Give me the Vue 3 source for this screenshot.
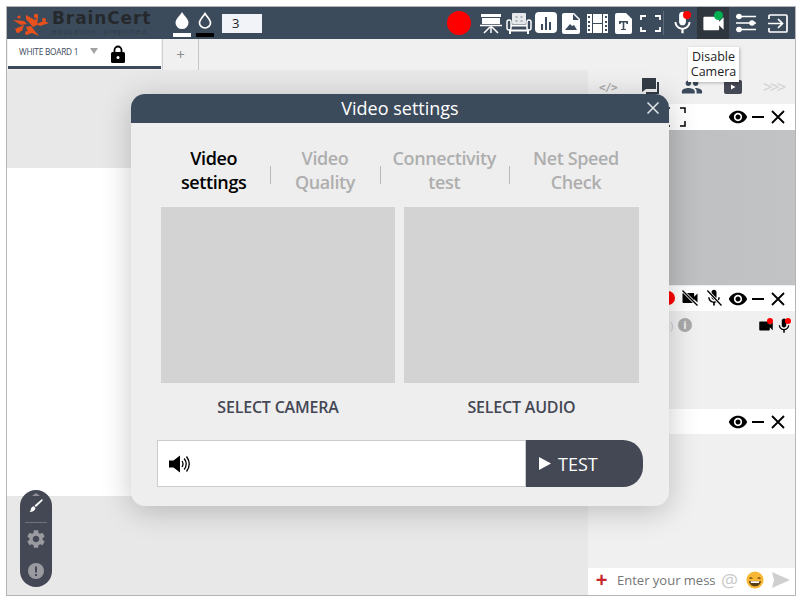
<script setup>
const modalTabs = [
  { label: 'Video settings', width: 114, active: true },
  { label: 'Video Quality', width: 110 },
  { label: 'Connectivity test', width: 130 },
  { label: 'Net Speed Check', width: 135 }
]
</script>

<template>
  <div class="page">
    <svg class="sprite" width="0" height="0">
      <symbol id="eye" viewBox="0 0 24 24"><path d="M12 4.5C7 4.5 2.73 7.61 1 12c1.73 4.39 6 7.5 11 7.5s9.27-3.11 11-7.5c-1.73-4.39-6-7.5-11-7.5zM12 17c-2.76 0-5-2.24-5-5s2.24-5 5-5 5 2.24 5 5-2.24 5-5 5zm0-8c-1.66 0-3 1.34-3 3s1.34 3 3 3 3-1.34 3-3-1.34-3-3-3z" /></symbol>
      <symbol id="cam" viewBox="0 0 24 24"><path d="M17 10.5V7c0-.55-.45-1-1-1H4c-.55 0-1 .45-1 1v10c0 .55.45 1 1 1h12c.55 0 1-.45 1-1v-3.5l4 4v-11l-4 4z" /></symbol>
      <symbol id="mic" viewBox="0 0 24 24"><path d="M12 14c1.66 0 2.99-1.34 2.99-3L15 5c0-1.66-1.34-3-3-3S9 3.34 9 5v6c0 1.66 1.34 3 3 3zm5.3-3c0 3-2.54 5.1-5.3 5.1S6.7 14 6.7 11H5c0 3.41 2.72 6.23 6 6.72V21h2v-3.28c3.28-.48 6-3.3 6-6.72h-1.7z" /></symbol>
      <symbol id="controls" viewBox="0 0 60 20">
        <use href="#eye" x="0" y="0" width="20" height="20" />
        <path d="M24 10h12" stroke="#000" stroke-width="2" fill="none" />
        <path d="M44 4l12 12M56 4L44 16" stroke="#000" stroke-width="1.8" fill="none" />
      </symbol>
    </svg>

    <div class="frame">
      <header class="topbar">
        <div class="logo">
          <svg class="logo-mark" width="38" height="26" viewBox="0 0 38 26">
            <g fill="#e8501c">
              <circle cx="24" cy="4" r="2.2" />
              <path d="M14 3l9 5 3-3-1 8-4 2-7-8zM1 8l11 1 3 3-6 1zM32 9l5 2-9 3-4-2zM3 17l9-4-2 6-5 1zM14 15l5-1 3 4 5 6-7-3-3 1z" />
              <circle cx="7" cy="5" r="1.6" />
              <circle cx="32" cy="8" r="2" />
              <circle cx="6" cy="19" r="2" />
              <circle cx="15" cy="21" r="2" />
            </g>
          </svg>
          <div class="logo-words">
            <span class="logo-name">BrainCert</span>
            <span class="logo-tag">education. simplified.</span>
          </div>
        </div>

        <div class="color-pick">
          <svg width="14" height="17" viewBox="0 0 14 17"><path d="M7 0c3 4.600 6.500 7.500 6.500 10.700a6.500 6.300 0 0 1-13 0C.5 7.500 4 4.600 7 0z" fill="#fff" /></svg>
          <i class="swatch white"></i>
        </div>
        <div class="color-pick second">
          <svg width="14" height="17" viewBox="0 0 14 17"><path d="M7 1.500c2.700 4 5.500 6.500 5.500 9.200a5.500 5.300 0 0 1-11 0C1.500 8 4.300 5.500 7 1.500z" fill="none" stroke="#fff" stroke-width="1.700" /></svg>
          <i class="swatch black"></i>
        </div>
        <div class="size-box">3</div>

        <div class="spacer"></div>

        <i class="record"></i>
        <svg class="tool" width="22" height="22" viewBox="0 0 22 22" style="margin-left: 9px">
          <path d="M1 2h20v3H1zM2 6h18v6H2z" fill="#fff" /><path d="M0 13.500h22" stroke="#fff" stroke-width="1.500" /><path d="M11 14v7M10 15l-6 6M12 15l6 6" stroke="#fff" stroke-width="1.500" fill="none" />
        </svg>
        <svg class="tool" width="26" height="22" viewBox="0 0 26 22" style="margin-left: 4px">
          <rect x="6" y="1" width="14" height="11" rx="1" fill="#e6e9ec" />
          <path d="M9.500 4h2v2h-2zM14.500 4h2v2h-2zM9.500 8h2v2h-2zM14.500 8h2v2h-2z" fill="#aab1b8" />
          <rect x="1" y="8" width="4" height="10" rx="2" fill="#3c4b5c" stroke="#fff" stroke-width="1.500" />
          <rect x="21" y="8" width="4" height="10" rx="2" fill="#3c4b5c" stroke="#fff" stroke-width="1.500" />
          <path d="M5 13.500h16M5 18.500h16" stroke="#fff" stroke-width="2" />
          <path d="M4 18v4M22 18v4" stroke="#fff" stroke-width="2" />
        </svg>
        <svg class="tool" width="22" height="22" viewBox="0 0 22 22" style="margin-left: 3px">
          <rect x="0" y="0" width="22" height="21" rx="4" fill="#fff" /><path d="M6 12h2v6H6zM10 5h2v13h-2zM14 10h2v8h-2z" fill="#3c4b5c" />
        </svg>
        <svg class="tool" width="18" height="21" viewBox="0 0 18 21" style="margin-left: 5px">
          <path d="M2 0h10l6 6v13a2 2 0 0 1-2 2H2a2 2 0 0 1-2-2V2a2 2 0 0 1 2-2z" fill="#fff" /><path d="M3 17l5-6 2 2 2-1 3 5zM11 1v6h6" fill="#3c4b5c" />
        </svg>
        <svg class="tool" width="21" height="19" viewBox="0 0 21 19" style="margin-left: 7px">
          <path d="M0 0h21v19H0z" fill="#fff" /><path d="M1 2h2v2H1zM1 7h2v2H1zM1 11h2v2H1zM1 15h2v2H1zM18 2h2v2h-2zM18 7h2v2h-2zM18 11h2v2h-2zM18 15h2v2h-2zM5 0h1v19H5zM15 0h1v19h-1zM5 9h11v1H5z" fill="#3c4b5c" />
        </svg>
        <svg class="tool" width="17" height="21" viewBox="0 0 17 21" style="margin-left: 7px">
          <path d="M2 0h9l6 6v13a2 2 0 0 1-2 2H2a2 2 0 0 1-2-2V2a2 2 0 0 1 2-2z" fill="#fff" /><path d="M4 8h9v3h-1.500l-.5-1.500H9.300V16H11v1H6v-1h1.700V9.500H6L5.500 11H4z" fill="#3c4b5c" />
        </svg>
        <svg class="tool" width="21" height="17" viewBox="0 0 21 17" style="margin-left: 8px">
          <path d="M1 5V1h5M15 1h5v4M1 12v4h5M15 16h5v-4" fill="none" stroke="#fff" stroke-width="1.800" />
        </svg>
        <i class="tool-sep"></i>
        <div class="mic-btn">
          <svg width="17" height="25" viewBox="4.500 1 15 21"><use href="#mic" width="24" height="24" fill="#fff" /></svg>
          <i class="dot red"></i>
        </div>
        <div class="cam-btn">
          <svg width="27" height="27" viewBox="0 0 24 24"><use href="#cam" width="24" height="24" fill="#fff" /></svg>
          <i class="dot green"></i>
        </div>
        <svg class="tool" width="20" height="20" viewBox="0 0 20 20" style="margin-left: 7px">
          <path d="M0 3.500h20M0 10h20M0 16.500h20" stroke="#fff" stroke-width="1.600" /><circle cx="3" cy="3.500" r="2.800" fill="#fff" /><circle cx="16" cy="10" r="2.800" fill="#fff" /><circle cx="3" cy="16.500" r="2.800" fill="#fff" />
        </svg>
        <svg class="tool" width="20" height="19" viewBox="0 0 20 19" style="margin-left: 12px">
          <path d="M1 5V2a1 1 0 0 1 1-1h16a1 1 0 0 1 1 1v15a1 1 0 0 1-1 1H2a1 1 0 0 1-1-1v-3" fill="none" stroke="#fff" stroke-width="1.700" /><path d="M0 9.500h14M10 5l4.500 4.500L10 14" fill="none" stroke="#fff" stroke-width="1.700" />
        </svg>
      </header>

      <nav class="tabbar">
        <div class="wb-tab">
          <span class="wb-name">WHITE BOARD 1</span>
          <i class="caret"></i>
          <svg class="lock" width="14" height="18" viewBox="0 0 14 18">
            <path d="M3.500 8V5a3.500 3.500 0 0 1 7 0v3" fill="none" stroke="#000" stroke-width="1.800" />
            <rect x="0" y="7" width="14" height="11" rx="1.500" fill="#000" />
            <circle cx="7" cy="12.500" r="1.500" fill="#fff" />
          </svg>
        </div>
        <div class="add-tab">+</div>
      </nav>

      <div class="main">
        <section class="board">
          <div class="board-gap top"></div>
          <div class="board-sheet"></div>
          <div class="board-gap bottom"></div>
        </section>

        <aside class="side">
          <div class="side-tabs">
            <span class="code">&lt;/&gt;</span>
            <svg class="chat-icon" width="20" height="20" viewBox="0 0 20 20">
              <path d="M1 1h14v11H5l-4 3z" fill="#333c46" /><path d="M17 5v11H5" fill="none" stroke="#333c46" stroke-width="2" />
            </svg>
            <svg width="22" height="22" viewBox="0 0 24 24"><path fill="#3c4b5c" d="M16 11c1.660 0 2.990-1.340 2.990-3S17.660 5 16 5c-1.660 0-3 1.340-3 3s1.340 3 3 3zm-8 0c1.660 0 2.990-1.340 2.990-3S9.660 5 8 5C6.340 5 5 6.340 5 8s1.340 3 3 3zm0 2c-2.330 0-7 1.170-7 3.500V19h14v-2.500c0-2.330-4.670-3.500-7-3.500zm8 0c-.29 0-.62.02-.97.05 1.160.84 1.970 1.970 1.970 3.450V19h6v-2.500c0-2.330-4.670-3.500-7-3.500z" /></svg>
            <svg width="18" height="14" viewBox="0 0 18 14">
              <rect width="18" height="14" rx="2" fill="#444754" /><path d="M7 4.500l4.500 2.500L7 9.500z" fill="#fff" />
            </svg>
            <span class="more">&gt;&gt;&gt;</span>
          </div>

          <div class="row-white first">
            <svg class="corners" width="22" height="20" viewBox="0 0 22 20">
              <path d="M1 6V1h5M16 1h5v5M1 14v5h5M16 19h5v-5" fill="none" stroke="#000" stroke-width="1.500" />
            </svg>
            <svg class="controls" width="60" height="20"><use href="#controls" width="60" height="20" /></svg>
          </div>
          <div class="video"></div>

          <div class="row-white second">
            <i class="rec-dot"></i>
            <span class="cam-off">
              <svg width="20" height="20" viewBox="0 0 24 24"><use href="#cam" width="24" height="24" /><path d="M3 3l18 18" stroke="#fff" stroke-width="3.500" /><path d="M3 3l18 18" stroke="#000" stroke-width="1.600" /></svg>
            </span>
            <span class="mic-off">
              <svg width="20" height="20" viewBox="0 0 24 24"><use href="#mic" width="24" height="24" /><path d="M4 3l17 18" stroke="#fff" stroke-width="3.500" /><path d="M4 3l17 18" stroke="#000" stroke-width="1.600" /></svg>
            </span>
            <svg class="controls" width="60" height="20"><use href="#controls" width="60" height="20" /></svg>
          </div>
          <div class="user-list">
            <span class="you">(you)</span>
            <span class="info">i</span>
            <span class="user-cam">
              <svg width="18" height="18" viewBox="0 0 24 24"><use href="#cam" width="24" height="24" /></svg>
              <i class="dot small"></i>
            </span>
            <span class="user-mic">
              <svg width="18" height="18" viewBox="0 0 24 24"><use href="#mic" width="24" height="24" /></svg>
              <i class="dot small"></i>
            </span>
          </div>

          <div class="row-white third">
            <svg class="controls" width="60" height="20"><use href="#controls" width="60" height="20" /></svg>
          </div>
          <div class="chat-log"></div>

          <div class="chat-input">
            <span class="plus">+</span>
            <span class="placeholder">Enter your mess</span>
            <span class="at">@</span>
            <svg class="emoji" width="18" height="18" viewBox="0 0 20 20">
              <circle cx="10" cy="10" r="9.500" fill="#f7b733" />
              <path d="M4 8.500q1.500-2 3 0M13 8.500q1.500-2 3 0" fill="none" stroke="#5b3d14" stroke-width="1.300" />
              <path d="M3.500 11h13c0 3.500-3 6-6.500 6s-6.500-2.500-6.500-6z" fill="#5b3d14" />
              <path d="M5 11.500h10l-.6 1.700H5.600z" fill="#fff" />
            </svg>
            <svg class="send" width="18" height="16" viewBox="0 0 18 16"><path d="M0 0l18 8-18 8 2-8z" fill="#cfcfcf" /></svg>
          </div>
        </aside>

        <div class="float-tools">
          <i class="float-caret"></i>
          <svg class="brush" width="14" height="14" viewBox="0 0 14 14">
            <path d="M13 0c.8.500.8 1.200.2 2L7 8 5.500 6.500z" fill="#fff" /><path d="M4.800 7.200L6.500 9c-.5 3-3.500 4-6 4 1.500-1 1-2.200 1.500-3.500.4-1.200 1.600-2 2.800-2.300z" fill="#fff" />
          </svg>
          <i class="float-line"></i>
          <svg class="gear" width="22" height="22" viewBox="0 0 24 24"><path fill="#9a9ba1" d="M19.140 12.940c.04-.3.06-.61.06-.94 0-.32-.02-.64-.07-.94l2.030-1.580c.18-.14.23-.41.12-.61l-1.920-3.320c-.12-.22-.37-.29-.59-.22l-2.390.96c-.5-.38-1.030-.7-1.620-.94l-.36-2.540c-.04-.24-.24-.41-.48-.41h-3.840c-.24 0-.43.17-.47.41l-.36 2.540c-.59.24-1.130.57-1.620.94l-2.390-.96c-.22-.08-.47 0-.59.22L2.740 8.870c-.12.21-.08.47.12.61l2.030 1.580c-.05.3-.09.63-.09.94s.02.64.07.94l-2.030 1.580c-.18.14-.23.41-.12.61l1.920 3.320c.12.22.37.29.59.22l2.390-.96c.5.38 1.030.7 1.620.94l.36 2.540c.05.24.24.41.48.41h3.840c.24 0 .44-.17.47-.41l.36-2.540c.59-.24 1.130-.56 1.620-.94l2.390.96c.22.08.47 0 .59-.22l1.920-3.320c.12-.22.07-.47-.12-.61l-2.010-1.580zM12 15.600c-1.980 0-3.600-1.620-3.600-3.600s1.620-3.600 3.600-3.600 3.600 1.620 3.600 3.600-1.620 3.600-3.600 3.600z" /></svg>
          <svg class="alert" width="16" height="16" viewBox="0 0 16 16">
            <circle cx="8" cy="8" r="8" fill="#9a9ba1" /><path d="M7 3.500h2v6H7zM7 11h2v2H7z" fill="#444754" />
          </svg>
        </div>
      </div>

      <div class="tooltip">Disable Camera</div>

      <div class="modal">
        <div class="modal-head">
          <span>Video settings</span>
          <svg class="modal-close" width="12" height="12" viewBox="0 0 12 12"><path d="M.5.5l11 11M11.500.5l-11 11" stroke="#e4e7ea" stroke-width="1.500" /></svg>
        </div>
        <div class="modal-body">
          <div class="modal-tabs">
            <div
              v-for="tab in modalTabs"
              :key="tab.label"
              class="modal-tab"
              :class="{ active: tab.active }"
              :style="{ width: tab.width + 'px' }"
            >{{ tab.label }}</div>
          </div>
          <div class="previews">
            <div class="preview-col">
              <div class="preview"></div>
              <div class="preview-label">SELECT CAMERA</div>
            </div>
            <div class="preview-col">
              <div class="preview"></div>
              <div class="preview-label">SELECT AUDIO</div>
            </div>
          </div>
          <div class="test-row">
            <div class="test-field">
              <svg width="22" height="20" viewBox="0 0 22 20">
                <path d="M0 6.500h4.500L11 1.500v17l-6.500-5H0z" fill="#000" />
                <path d="M13 7q2 3 0 6M15.200 4.500q4 5.500 0 11M17.500 2.500q5.500 7.500 0 15" fill="none" stroke="#000" stroke-width="1.300" />
              </svg>
            </div>
            <div class="test-btn">
              <svg width="12" height="13" viewBox="0 0 12 13"><path d="M0 0l12 6.500L0 13z" fill="#fff" /></svg>
              <span>TEST</span>
            </div>
          </div>
        </div>
      </div>
    </div>
  </div>
</template>

<style>
html,
body {
  margin: 0;
  background: #fff;
  overflow: hidden;
}
</style>

<style scoped>
* {
  box-sizing: border-box;
}

i {
  display: block;
}

.page {
  width: 800px;
  height: 600px;
  padding: 6px 4px 4px 6px;
  background: #fff;
  font-family: "Open Sans", "Liberation Sans", sans-serif;
}

.sprite {
  position: absolute;
}

.frame {
  position: relative;
  display: flex;
  flex-direction: column;
  width: 790px;
  height: 590px;
  border: 1px solid #b5b5b5;
  overflow: hidden;
}

/* top bar */
.topbar {
  display: flex;
  align-items: center;
  flex: none;
  height: 32px;
  padding: 0 7px 0 5px;
  background: #3c4b5c;
}

.logo {
  display: flex;
  width: 154px;
  height: 32px;
  padding-top: 5px;
}

.logo-mark {
  flex: none;
}

.logo-words {
  display: flex;
  flex-direction: column;
  margin: -4.500px 0 0 2px;
}

.logo-name {
  font-family: "DejaVu Sans", sans-serif;
  font-size: 17px;
  font-weight: 700;
  line-height: 20px;
  letter-spacing: 0.9px;
  color: #26292c;
  white-space: nowrap;
}

.logo-tag {
  font-family: "Liberation Sans", sans-serif;
  font-size: 7.500px;
  line-height: 8px;
  letter-spacing: 1.300px;
  color: #2e3a46;
  white-space: nowrap;
}

.color-pick {
  display: flex;
  flex-direction: column;
  align-items: center;
  width: 18px;
  height: 32px;
  margin-left: 7px;
  padding-top: 5px;
}

.color-pick.second {
  margin-left: 5px;
}

.swatch {
  width: 18px;
  height: 4px;
  margin-top: 4px;
}

.swatch.white {
  background: #fff;
}

.swatch.black {
  background: #000;
}

.size-box {
  width: 40px;
  height: 19px;
  margin-left: 8px;
  padding-left: 10px;
  background: #f1f3f9;
  font-size: 13px;
  line-height: 19px;
  color: #222;
}

.spacer {
  flex: 1;
}

.record {
  width: 24px;
  height: 24px;
  border-radius: 50%;
  background: #f00;
}

.tool {
  flex: none;
}

.tool-sep {
  width: 1px;
  height: 24px;
  margin-left: 2px;
  background: #5d6a78;
}

.mic-btn {
  position: relative;
  display: flex;
  justify-content: center;
  width: 24px;
  height: 26px;
  margin-left: 6px;
}

.cam-btn {
  position: relative;
  display: flex;
  align-items: center;
  justify-content: center;
  width: 32px;
  height: 32px;
  margin-left: 3px;
  background: #2f363d;
}

.dot {
  position: absolute;
  border-radius: 50%;
}

.dot.red {
  top: 1px;
  right: 3px;
  width: 8px;
  height: 8px;
  background: #f00;
}

.dot.green {
  top: 4px;
  right: 6px;
  width: 9px;
  height: 9px;
  background: #00b050;
}

/* whiteboard tabs */
.tabbar {
  display: flex;
  flex: none;
  height: 31px;
  background: #f0f0f0;
}

.wb-tab {
  display: flex;
  align-items: center;
  width: 153px;
  height: 30px;
  margin-left: 1px;
  padding: 0 0 3px 11px;
  background: #fff;
  border-bottom: 3px solid #3c4b5c;
}

.wb-name {
  font-size: 8.300px;
  letter-spacing: -0.25px;
  color: #3c4b5c;
  white-space: nowrap;
}

.caret {
  width: 0;
  height: 0;
  margin-left: 12px;
  border-style: solid;
  border-width: 6px 4.500px 0;
  border-color: #a3a3a3 transparent transparent;
}

.lock {
  margin: 5px 0 0 13px;
}

.add-tab {
  width: 37px;
  margin-left: 1px;
  border-left: 1px solid #d0d0d0;
  border-right: 1px solid #c6c6c6;
  background: #f0f0f0;
  text-align: center;
  font-size: 15px;
  line-height: 30px;
  color: #8d8d8d;
}

/* main area */
.main {
  position: relative;
  display: flex;
  flex: 1;
  min-height: 0;
}

.board {
  display: flex;
  flex-direction: column;
  flex: none;
  width: 581px;
}

.board-gap {
  background: #e8e8e8;
}

.board-gap.top {
  height: 98px;
}

.board-gap.bottom {
  flex: 1;
}

.board-sheet {
  height: 328px;
  background: #fff;
}

.side {
  display: flex;
  flex-direction: column;
  flex: 1;
  background: #f0f0f0;
}

.side-tabs {
  display: flex;
  align-items: center;
  justify-content: space-between;
  height: 34px;
  padding: 0 11px 0 11px;
}

.chat-icon {
  margin-left: 3px;
}

.code {
  font-family: "DejaVu Sans Mono", monospace;
  font-size: 11px;
  font-weight: 700;
  letter-spacing: -0.6px;
  color: #a9a9a9;
}

.more {
  font-family: "DejaVu Sans Mono", monospace;
  font-size: 15px;
  letter-spacing: -2px;
  color: #d5d5d5;
}

.row-white {
  position: relative;
  display: flex;
  align-items: center;
  justify-content: flex-end;
  flex: none;
  padding-right: 7px;
  background: #fff;
}

.row-white.first {
  height: 26px;
}

.row-white.second {
  height: 25px;
  margin-top: 1px;
}

.row-white.third {
  height: 25px;
  margin-top: 1px;
}

.corners {
  position: absolute;
  left: 76px;
  top: 3px;
}

.video {
  flex: none;
  height: 155px;
  background: linear-gradient(90deg, #bcbdbf, #c2c3c5);
}

.rec-dot {
  position: absolute;
  left: 73px;
  top: 5px;
  width: 14px;
  height: 14px;
  border-radius: 50%;
  background: #f00;
}

.cam-off,
.mic-off {
  position: absolute;
  top: 2px;
  display: flex;
}

.cam-off {
  left: 92px;
}

.mic-off {
  left: 116px;
}

.user-list {
  position: relative;
  flex: none;
  height: 97px;
}

.you {
  position: absolute;
  left: 60px;
  top: 7px;
  font-size: 11px;
  color: #c9c9c9;
}

.info {
  position: absolute;
  left: 90px;
  top: 7px;
  width: 14px;
  height: 14px;
  border-radius: 50%;
  background: #a9a9a9;
  text-align: center;
  font-size: 11px;
  font-weight: 700;
  line-height: 14px;
  color: #f0f0f0;
}

.user-cam,
.user-mic {
  position: absolute;
  top: 6px;
  display: flex;
}

.user-cam {
  left: 169px;
}

.user-mic {
  left: 187px;
}

.dot.small {
  top: 1px;
  right: 2px;
  width: 6px;
  height: 6px;
  background: #f00;
}

.chat-log {
  flex: 1;
}

.chat-input {
  display: flex;
  align-items: center;
  flex: none;
  height: 27px;
  padding: 0 0 3px 7px;
  background: #fff;
}

.plus {
  width: 13px;
  font-family: "Liberation Sans", sans-serif;
  font-size: 20px;
  font-weight: 700;
  line-height: 20px;
  text-align: center;
  color: #c8272c;
}

.placeholder {
  width: 96px;
  margin-left: 9px;
  font-size: 13px;
  color: #767676;
  white-space: nowrap;
}

.at {
  margin-left: 8px;
  font-size: 19px;
  line-height: 20px;
  color: #c9c9c9;
}

.emoji {
  margin-left: 8px;
}

.send {
  margin-left: 8px;
}

.float-tools {
  position: absolute;
  left: 13px;
  top: 420px;
  display: flex;
  flex-direction: column;
  align-items: center;
  width: 32px;
  height: 97px;
  padding-top: 3px;
  border-radius: 16px;
  background: #444754;
}

.float-caret {
  width: 0;
  height: 0;
  border-style: solid;
  border-width: 0 4px 3px;
  border-color: transparent transparent #8d8e96;
}

.brush {
  margin-top: 3px;
}

.float-line {
  width: 22px;
  height: 1px;
  margin-top: 9px;
  background: #70727c;
}

.gear {
  margin-top: 5px;
}

.alert {
  margin-top: 13px;
}

/* tooltip over the toolbar */
.tooltip {
  position: absolute;
  left: 681px;
  top: 40px;
  width: 51px;
  height: 35px;
  padding-top: 2px;
  background: #fff;
  box-shadow: 1px 1px 3px rgba(0, 0, 0, 0.25);
  text-align: center;
  font-size: 12.500px;
  line-height: 15px;
  color: #222;
}

/* dialog */
.modal {
  position: absolute;
  left: 124px;
  top: 87px;
  width: 538px;
  height: 412px;
  border-radius: 14px;
  background: #eee;
  box-shadow: 0 5px 30px rgba(0, 0, 0, 0.22);
  overflow: hidden;
}

.modal-head {
  position: relative;
  height: 29px;
  background: #3c4b5c;
  text-align: center;
  font-size: 18px;
  line-height: 29px;
  color: #fff;
}

.modal-close {
  position: absolute;
  right: 10px;
  top: 8px;
}

.modal-body {
  padding: 23px 26px 0;
}

.modal-tabs {
  display: flex;
}

.modal-tab {
  position: relative;
  padding: 0 5px;
  text-align: center;
  font-size: 18px;
  font-weight: 600;
  line-height: 24px;
  letter-spacing: -0.4px;
  color: #aeaeae;
}

.modal-tab.active {
  color: #000;
}

.modal-tab + .modal-tab::before {
  content: "";
  position: absolute;
  left: 0;
  top: 20px;
  width: 1px;
  height: 18px;
  background: #b9b9b9;
}

.previews {
  display: grid;
  grid-template-columns: 234px 235px;
  gap: 9px;
  margin: 13px 4px 0;
}

.preview {
  height: 176px;
  background: #d3d3d3;
}

.preview-label {
  margin-top: 13px;
  text-align: center;
  font-size: 16px;
  font-weight: 600;
  line-height: 22px;
  letter-spacing: -0.2px;
  color: #444754;
}

.test-row {
  display: flex;
  margin-top: 22px;
}

.test-field {
  display: flex;
  align-items: center;
  width: 369px;
  height: 47px;
  padding-left: 11px;
  background: #fff;
  border: 1px solid #ccc;
}

.test-btn {
  display: flex;
  align-items: center;
  gap: 7px;
  width: 117px;
  height: 47px;
  padding-left: 13px;
  border-radius: 0 20px 20px 0;
  background: #444754;
  font-size: 18px;
  color: #fff;
}
</style>
